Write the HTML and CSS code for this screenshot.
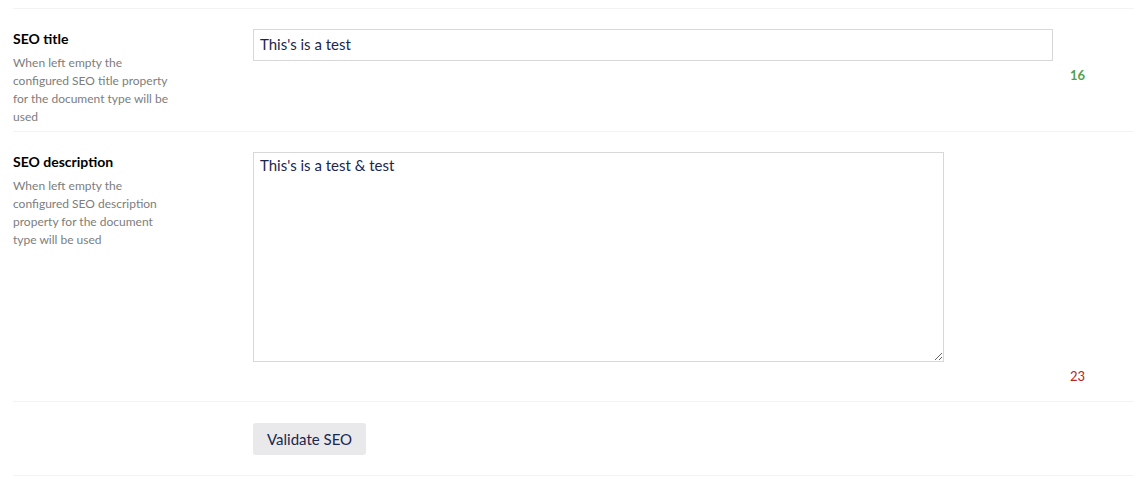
FILE: index.html
```html
<!DOCTYPE html>
<html lang="en">
<head>
<meta charset="utf-8">
<title>SEO</title>
<link rel="stylesheet" href="styles.css">
</head>
<body>
<div class="props">
  <div class="prop">
    <div class="prop-label">
      <div class="label">SEO title</div>
      <div class="desc">When left empty the configured SEO title property for the document type will be used</div>
    </div>
    <div class="prop-editor">
      <input class="field field-input" type="text" value="This's is a test">
      <div class="count count-ok">16</div>
    </div>
  </div>
  <div class="prop">
    <div class="prop-label">
      <div class="label">SEO description</div>
      <div class="desc">When left empty the configured SEO description property for the document type will be used</div>
    </div>
    <div class="prop-editor">
      <textarea class="field field-area">This's is a test &amp; test</textarea>
      <div class="count count-bad">23</div>
    </div>
  </div>
  <div class="prop prop-actions">
    <div class="prop-label"></div>
    <div class="prop-editor">
      <button class="btn" type="button">Validate SEO</button>
    </div>
  </div>
</div>
</body>
</html>
```

FILE: styles.css
```css
html, body {
  margin: 0;
  padding: 0;
  background: #ffffff;
}

body {
  font-family: Lato, "Open Sans", sans-serif;
  color: #1b264f;
}

.props {
  padding: 8px 0 0 13px;
}

.prop {
  display: flex;
  align-items: flex-start;
  border-top: 1px solid #f3f3f5;
  padding: 20px 0 5px;
}

.prop:last-child {
  border-bottom: 1px solid #f3f3f5;
}

.prop-actions {
  padding: 21px 0 20px;
}

.prop-label {
  width: 240px;
  flex: none;
}

.label {
  font-size: 14px;
  line-height: 20px;
  font-weight: 700;
  color: #000000;
}

.desc {
  margin-top: 5px;
  width: 160px;
  font-size: 12px;
  line-height: 18px;
  color: #7d7d7d;
}

.prop-editor {
  display: grid;
  grid-template-columns: 817px auto;
  align-items: start;
  align-content: start;
  justify-items: start;
}

.field {
  grid-column: 1;
  grid-row: 1;
  box-sizing: border-box;
  border: 1px solid #d8d7d9;
  background: #ffffff;
  font-family: Lato, "Open Sans", sans-serif;
  font-size: 15px;
  color: #1b264f;
  margin: 0;
  outline: none;
}

.field-input {
  width: 800px;
  height: 32px;
  padding: 0 6px 2px;
}

.field-area {
  width: 691px;
  height: 210px;
  padding: 2px 6px;
  line-height: 20px;
  resize: vertical;
}

.count {
  grid-column: 2;
  grid-row: 2;
  margin-top: 4px;
  margin-bottom: 10px;
  font-size: 13px;
  line-height: 20px;
}

.count-ok {
  color: #4da34e;
  font-weight: 700;
}

.count-bad {
  color: #b3261e;
}

.btn {
  grid-column: 1;
  font-family: Lato, "Open Sans", sans-serif;
  font-size: 15px;
  color: #1b264f;
  background: #e9e9eb;
  border: none;
  border-radius: 3px;
  height: 32px;
  padding: 0 14px 1px;
  margin: 0;
  cursor: pointer;
}
```
